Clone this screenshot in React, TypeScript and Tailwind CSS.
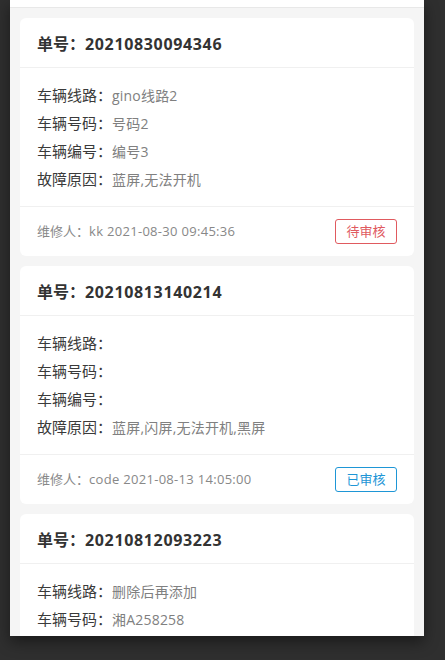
import React from 'react';

type Order = {
  no: string;
  line: string;
  plate: string;
  code: string;
  fault: string;
  repairer: string;
  time: string;
  reviewed: boolean;
};

const ORDERS: Order[] = [
  {
    no: '20210830094346',
    line: 'gino线路2',
    plate: '号码2',
    code: '编号3',
    fault: '蓝屏,无法开机',
    repairer: 'kk',
    time: '2021-08-30 09:45:36',
    reviewed: false,
  },
  {
    no: '20210813140214',
    line: '',
    plate: '',
    code: '',
    fault: '蓝屏,闪屏,无法开机,黑屏',
    repairer: 'code',
    time: '2021-08-13 14:05:00',
    reviewed: true,
  },
  {
    no: '20210812093223',
    line: '删除后再添加',
    plate: '湘A258258',
    code: '',
    fault: '',
    repairer: '',
    time: '',
    reviewed: false,
  },
];

const FONT = { fontFamily: '"Open Sans", "Noto Sans CJK SC", sans-serif' };

function Row({ label, value }: { label: string; value: string }) {
  return (
    <div className="flex h-[28px] items-center">
      <span className="text-[15px] text-[#3a3a3a]">{label}：</span>
      <span className="text-[14px] tracking-[0.2px] text-[#808080]">{value}</span>
    </div>
  );
}

function OrderCard({ order }: { order: Order }) {
  return (
    <div className="shrink-0 rounded-[6px] bg-white">
      <div className="flex h-[50px] items-center border-b border-[#f0f0f0] px-[17px] pt-[2px]">
        <span className="text-[16px] font-bold text-[#333]">
          单号：<span className="tracking-[0.65px]">{order.no}</span>
        </span>
      </div>
      <div className="px-[17px] pb-[13px] pt-[13px]">
        <Row label="车辆线路" value={order.line} />
        <Row label="车辆号码" value={order.plate} />
        <Row label="车辆编号" value={order.code} />
        <Row label="故障原因" value={order.fault} />
      </div>
      <div className="flex h-[50px] items-center justify-between border-t border-[#f0f0f0] px-[17px]">
        <span className="text-[13px] text-[#888]">
          维修人：<span className="tracking-[0.3px]">{order.repairer} {order.time}</span>
        </span>
        {order.reviewed ? (
          <span className="flex h-[25px] w-[62px] items-center justify-center rounded-[3px] border border-[#1e96d6] text-[13px] text-[#1e96d6]">
            已审核
          </span>
        ) : (
          <span className="flex h-[25px] w-[62px] items-center justify-center rounded-[3px] border border-[#e05a5f] text-[13px] text-[#e05a5f]">
            待审核
          </span>
        )}
      </div>
    </div>
  );
}

export default function App() {
  return (
    <div className="h-[660px] w-[445px] overflow-hidden bg-[#2f2f2f]" style={FONT}>
      <div className="ml-[10px] flex h-[636px] w-[414px] flex-col overflow-hidden bg-[#f5f5f5] shadow-[0_6px_14px_rgba(0,0,0,0.45)]">
        <div className="h-[8px] shrink-0 border-b border-[#e8e8e8] bg-white" />
        <div className="flex flex-col gap-[10px] px-[10px] pt-[10px]">
          {ORDERS.map(o => (
            <OrderCard key={o.no} order={o} />
          ))}
        </div>
      </div>
    </div>
  );
}
